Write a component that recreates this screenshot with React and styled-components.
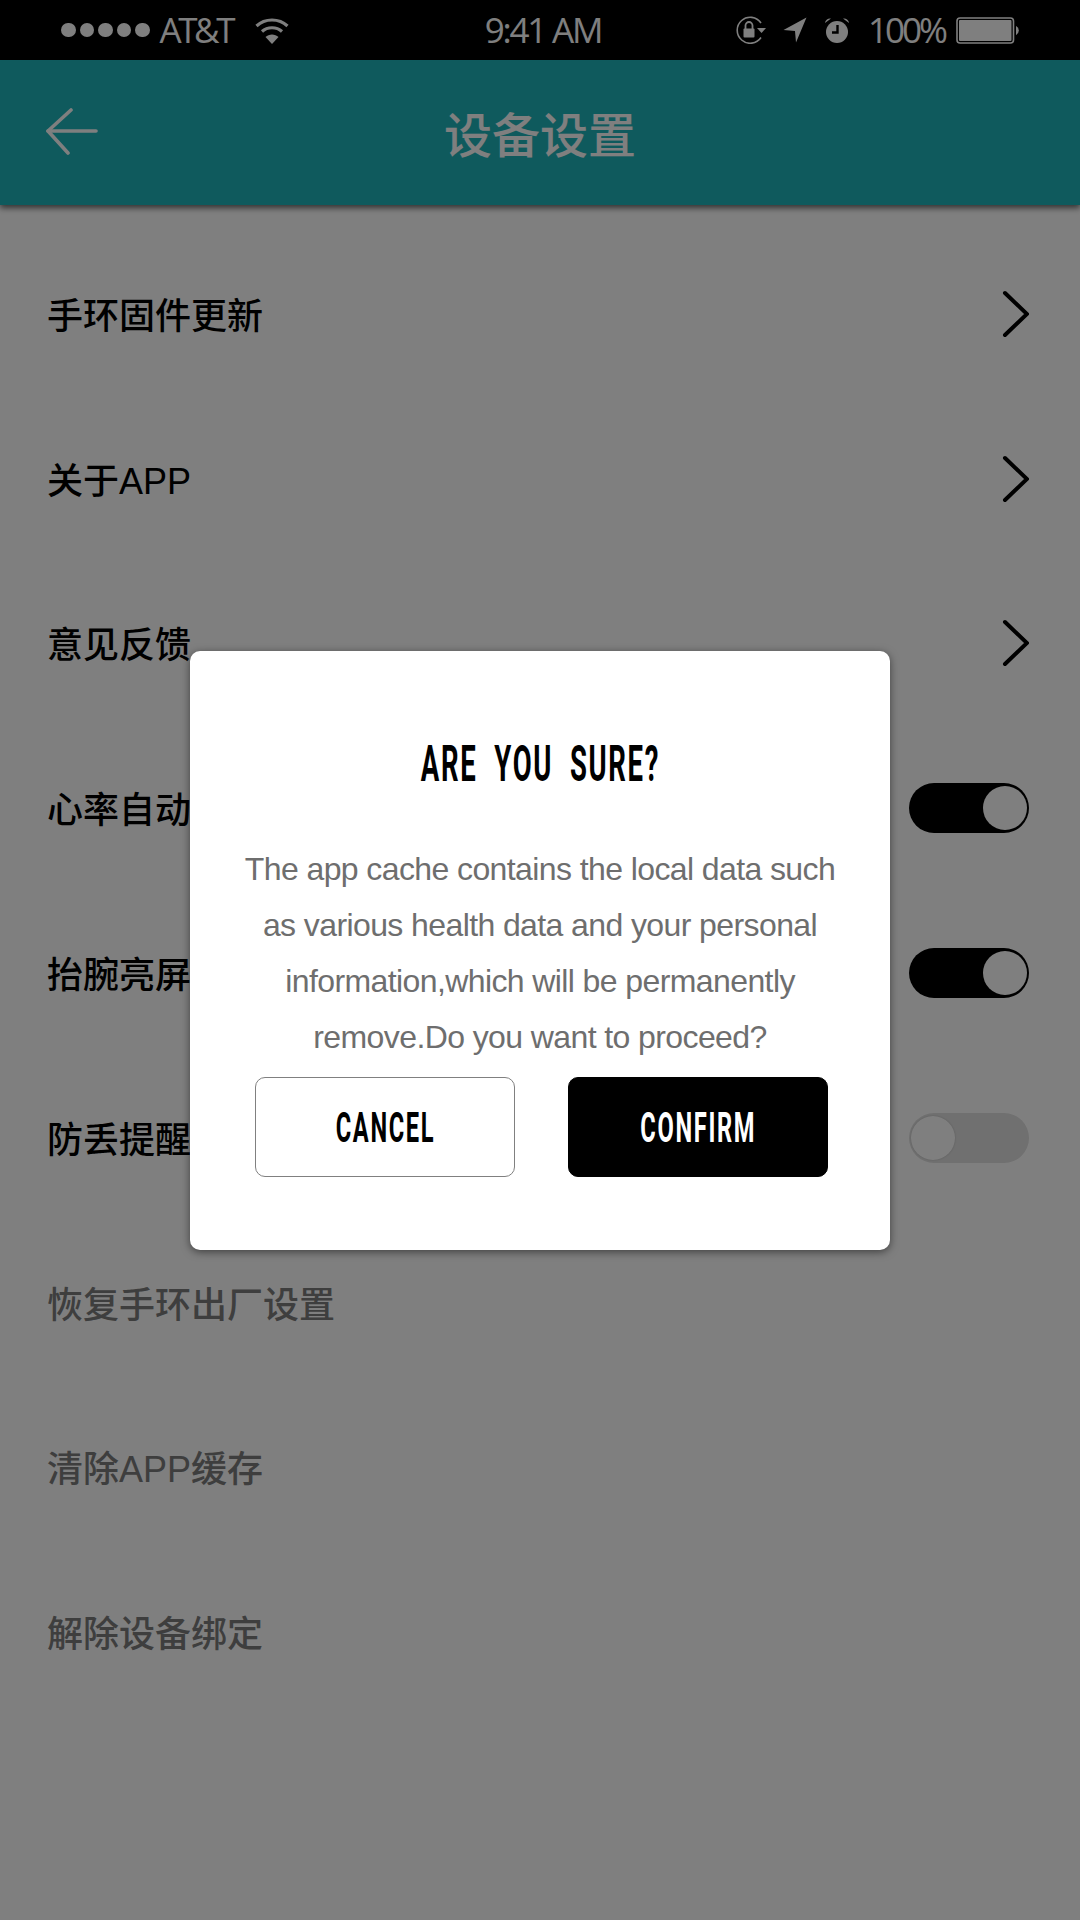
import React from 'react';
import styled, { createGlobalStyle } from 'styled-components';

const rows = [
  { label: '手环固件更新', type: 'link' },
  { label: '关于APP', type: 'link' },
  { label: '意见反馈', type: 'link' },
  { label: '心率自动检测', type: 'on' },
  { label: '抬腕亮屏', type: 'on' },
  { label: '防丢提醒', type: 'off' },
  { label: '恢复手环出厂设置', muted: true },
  { label: '清除APP缓存', muted: true },
  { label: '解除设备绑定', muted: true },
];

const App = () => {
  return (
    <Page>
      <GlobalStyle />
      <StatusBar>
        <StatusLeft>
          <Dots>
            <Dot /><Dot /><Dot /><Dot /><Dot />
          </Dots>
          <StatusCarrier>AT&amp;T</StatusCarrier>
          <WifiIcon />
        </StatusLeft>
        <StatusTime>9:41 AM</StatusTime>
        <StatusRight>
          <LockIcon />
          <LocationIcon />
          <AlarmIcon />
          <StatusPercent>100%</StatusPercent>
          <BatteryIcon />
        </StatusRight>
      </StatusBar>
      <Header>
        <BackButton>
          <svg width="54" height="48" viewBox="0 0 54 48" fill="none" stroke="#fff" strokeWidth="3.6" strokeLinecap="round" strokeLinejoin="round">
            <path d="M26 2 L3 23 L23 45" />
            <path d="M3 23 H51" />
          </svg>
        </BackButton>
        <HeaderTitle>设备设置</HeaderTitle>
      </Header>
      <List>
        {rows.map((row) => (
          <Row key={row.label}>
            <RowLabel $muted={row.muted}>{row.label}</RowLabel>
            {row.type === 'link' && (
              <svg width="28" height="48" viewBox="0 0 28 48" fill="none" stroke="#000" strokeWidth="4" strokeLinecap="round" strokeLinejoin="miter">
                <path d="M4 3 L26 24 L4 45" />
              </svg>
            )}
            {row.type === 'on' && (
              <Switch $on>
                <Knob $on />
              </Switch>
            )}
            {row.type === 'off' && (
              <Switch>
                <Knob />
              </Switch>
            )}
          </Row>
        ))}
      </List>
      <Overlay>
        <Modal>
          <ModalTitle>
            <Condensed>ARE&nbsp; YOU&nbsp; SURE?</Condensed>
          </ModalTitle>
          <ModalText>
            The app cache contains the local data such as various health data and your personal information,which will be permanently remove.Do you want to proceed?
          </ModalText>
          <ModalButtons>
            <ModalButton>
              <ButtonLabel>CANCEL</ButtonLabel>
            </ModalButton>
            <ModalButton $primary>
              <ButtonLabel>CONFIRM</ButtonLabel>
            </ModalButton>
          </ModalButtons>
        </Modal>
      </Overlay>
    </Page>
  );
};

const WifiIcon = () => (
  <WifiSvg width="34" height="27" viewBox="0 0 34 27" fill="none" stroke="#fff" strokeWidth="3.2">
    <path d="M1.5 9 C10 1 24 1 32.5 9" />
    <path d="M7 14.5 C12.5 9.5 21.5 9.5 27 14.5" />
    <path d="M17 27 L10.5 20 C14 16.5 20 16.5 23.5 20 Z" fill="#fff" stroke="none" />
  </WifiSvg>
);

const LockIcon = () => (
  <svg width="31" height="28" viewBox="0 0 31 28" fill="none">
    <path d="M26 21.5 A13 13 0 1 1 26 7" stroke="#fff" strokeWidth="1.6" />
    <path d="M22 12 H31 L26.5 17 Z" fill="#fff" />
    <rect x="8.5" y="12.5" width="11" height="9" rx="1" fill="#fff" />
    <path d="M10.5 13 V9.5 A3.5 3.5 0 0 1 17.5 9.5 V13" stroke="#fff" strokeWidth="1.8" />
  </svg>
);

const LocationIcon = () => (
  <svg width="24" height="26" viewBox="0 0 24 26" fill="#fff">
    <path d="M23.5 0.5 L0.5 13 L12 14 L13 25.5 Z" />
  </svg>
);

const AlarmIcon = () => (
  <svg width="26" height="26" viewBox="0 0 26 26">
    <circle cx="13" cy="15" r="11" fill="#fff" />
    <path d="M1 6 A5 5 0 0 1 7 1.5 Z M25 6 A5 5 0 0 0 19 1.5 Z" fill="#fff" />
    <path d="M13.5 8 V15.5 H8" fill="none" stroke="#000" strokeWidth="2.4" />
  </svg>
);

const BatteryIcon = () => (
  <svg width="65" height="27" viewBox="0 0 65 27">
    <rect x="1" y="1" width="56.5" height="25" rx="3" fill="none" stroke="#fff" strokeWidth="1.6" />
    <rect x="3" y="3" width="52.5" height="21" rx="1" fill="#fff" />
    <path d="M60 9 A5 5 0 0 1 60 18 Z" fill="#fff" />
  </svg>
);

const GlobalStyle = createGlobalStyle`
  html, body {
    margin: 0;
    padding: 0;
    background: #fff;
  }
  * {
    box-sizing: border-box;
  }
`;

const Page = styled.div`
  position: relative;
  width: 1080px;
  height: 1920px;
  overflow: hidden;
  background: #fff;
  font-family: 'Liberation Sans', 'Noto Sans CJK SC', sans-serif;
`;

const StatusBar = styled.div`
  height: 60px;
  padding: 0 59px 0 61px;
  background: #000;
  color: #fff;
  display: grid;
  grid-template-columns: 1fr auto 1fr;
  align-items: center;
`;

const StatusLeft = styled.div`
  display: flex;
  align-items: center;
`;

const StatusRight = styled.div`
  display: flex;
  align-items: center;
  justify-content: flex-end;
  gap: 17px;
`;

const Dots = styled.div`
  display: flex;
  gap: 4px;
  margin-right: 10px;
`;

const Dot = styled.span`
  width: 14.5px;
  height: 14.5px;
  border-radius: 50%;
  background: #fff;
`;

const StatusText = styled.span`
  font-family: 'Open Sans', sans-serif;
  font-size: 35px;
  line-height: 60px;
  letter-spacing: -2.2px;
`;

const StatusCarrier = styled(StatusText)`
  letter-spacing: -3.4px;
`;

const StatusTime = styled(StatusText)`
  margin-left: 4px;
`;

const StatusPercent = styled(StatusText)`
  letter-spacing: -3px;
  margin-left: 1px;
  margin-right: -6px;
`;

const WifiSvg = styled.svg`
  margin-left: 23px;
`;

const Header = styled.div`
  position: relative;
  height: 145px;
  background: #1eb4bb;
  box-shadow: 0 3px 6px rgba(0, 0, 0, 0.6);
  display: flex;
  align-items: center;
  justify-content: center;
`;

const BackButton = styled.div`
  position: absolute;
  left: 45px;
  top: 48px;
  line-height: 0;
`;

const HeaderTitle = styled.div`
  font-family: 'Noto Sans CJK SC', sans-serif;
  font-size: 48px;
  font-weight: 500;
  color: #fff;
  margin-bottom: 2px;
`;

const List = styled.div`
  padding: 26.5px 51px 0 47px;
`;

const Row = styled.div`
  height: 164.8px;
  display: flex;
  align-items: center;
  justify-content: space-between;
`;

const RowLabel = styled.div`
  font-size: 36px;
  font-weight: 500;
  margin-bottom: 2px;
  color: ${(p) => (p.$muted ? '#7d7d7d' : '#000')};
`;

const Switch = styled.div`
  width: 120px;
  height: 50px;
  padding: 3px 2px;
  border-radius: 25px;
  background: ${(p) => (p.$on ? '#000' : '#e0e0e0')};
  display: flex;
  justify-content: ${(p) => (p.$on ? 'flex-end' : 'flex-start')};
`;

const Knob = styled.div`
  width: 44px;
  height: 44px;
  border-radius: 50%;
  background: #fff;
  box-shadow: ${(p) => (p.$on ? 'none' : '0 0 2px rgba(0, 0, 0, 0.2)')};
`;

const Overlay = styled.div`
  position: absolute;
  inset: 0;
  background: rgba(0, 0, 0, 0.5);
  display: flex;
  justify-content: center;
  align-items: flex-start;
  padding-top: 651px;
`;

const Modal = styled.div`
  width: 700px;
  height: 599px;
  padding: 86px 50px 0;
  background: #fff;
  border-radius: 10px;
  box-shadow: 0 2px 8px rgba(0, 0, 0, 0.5);
  display: flex;
  flex-direction: column;
  align-items: center;
`;

const ModalTitle = styled.div`
  height: 54px;
  color: #000;
  font-size: 50px;
  line-height: 54px;
  white-space: nowrap;
`;

const Condensed = styled.span`
  display: inline-block;
  font-family: Roboto, 'Liberation Sans', sans-serif;
  font-weight: 700;
  letter-spacing: 3px;
  transform: scaleX(0.55);
`;

const ModalText = styled.div`
  margin-top: 50px;
  width: 600px;
  font-size: 32px;
  line-height: 56px;
  letter-spacing: -0.6px;
  color: #6e6e6e;
  text-align: center;
`;

const ModalButtons = styled.div`
  margin-top: 12px;
  margin-left: 3px;
  width: 573px;
  display: flex;
  justify-content: space-between;
`;

const ModalButton = styled.div`
  width: 260px;
  height: 100px;
  border-radius: 10px;
  border: 1px solid ${(p) => (p.$primary ? '#000' : '#808080')};
  background: ${(p) => (p.$primary ? '#000' : '#fff')};
  color: ${(p) => (p.$primary ? '#fff' : '#000')};
  display: flex;
  align-items: center;
  justify-content: center;
`;

const ButtonLabel = styled.span`
  display: inline-block;
  font-family: Roboto, 'Liberation Sans', sans-serif;
  font-size: 43px;
  font-weight: 700;
  letter-spacing: 3px;
  transform: scaleX(0.55);
`;

export default App;
